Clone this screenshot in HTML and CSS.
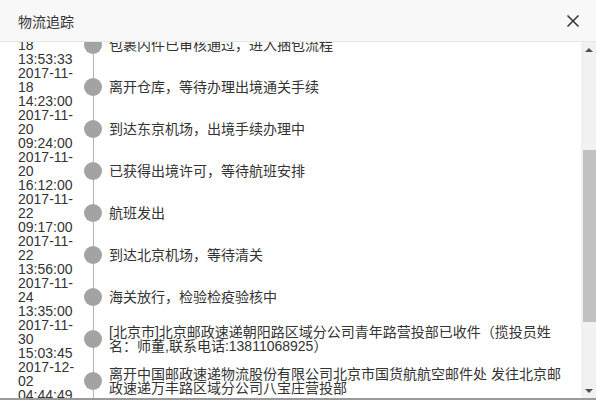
FILE: index.html
```html
<!DOCTYPE html>
<html>

<head>
    <title>物流追踪</title>
    <meta charset="utf-8">
    <meta name="viewport" content="width=device-width, initial-scale=1.0">
    <link rel="stylesheet" href="styles.css">
</head>

<body>
    <section class="dialog">
        <header class="kop">
            <h1>物流追踪</h1>
            <button class="luk" aria-label="关闭">
                <svg width="14" height="14" viewBox="0 0 14 14">
                    <path d="M1.5 1.5 L12.5 12.5 M12.5 1.5 L1.5 12.5" stroke="#333" stroke-width="1.5" fill="none" />
                </svg>
            </button>
        </header>

        <div class="krop">
            <div class="spor">
                <ul class="liste">
                    <li class="trin">
                        <p class="tid">2017-11-16 09:30:12</p>
                        <span class="prik"></span>
                        <p class="tekst">快件已揽收</p>
                    </li>
                    <li class="trin">
                        <p class="tid">2017-11-16 18:20:45</p>
                        <span class="prik"></span>
                        <p class="tekst">到达东京转运仓库</p>
                    </li>
                    <li class="trin">
                        <p class="tid">2017-11-17 11:05:20</p>
                        <span class="prik"></span>
                        <p class="tekst">包裹入库，等待审核</p>
                    </li>
                    <li class="trin">
                        <p class="tid">2017-11-17 16:42:10</p>
                        <span class="prik"></span>
                        <p class="tekst">包裹称重完成</p>
                    </li>
                    <li class="trin">
                        <p class="tid">2017-11-18 13:53:33</p>
                        <span class="prik"></span>
                        <p class="tekst">包裹内件已审核通过，进入捆包流程</p>
                    </li>
                    <li class="trin">
                        <p class="tid">2017-11-18 14:23:00</p>
                        <span class="prik"></span>
                        <p class="tekst">离开仓库，等待办理出境通关手续</p>
                    </li>
                    <li class="trin">
                        <p class="tid">2017-11-20 09:24:00</p>
                        <span class="prik"></span>
                        <p class="tekst">到达东京机场，出境手续办理中</p>
                    </li>
                    <li class="trin">
                        <p class="tid">2017-11-20 16:12:00</p>
                        <span class="prik"></span>
                        <p class="tekst">已获得出境许可，等待航班安排</p>
                    </li>
                    <li class="trin">
                        <p class="tid">2017-11-22 09:17:00</p>
                        <span class="prik"></span>
                        <p class="tekst">航班发出</p>
                    </li>
                    <li class="trin">
                        <p class="tid">2017-11-22 13:56:00</p>
                        <span class="prik"></span>
                        <p class="tekst">到达北京机场，等待清关</p>
                    </li>
                    <li class="trin">
                        <p class="tid">2017-11-24 13:35:00</p>
                        <span class="prik"></span>
                        <p class="tekst">海关放行，检验检疫验核中</p>
                    </li>
                    <li class="trin">
                        <p class="tid">2017-11-30 15:03:45</p>
                        <span class="prik"></span>
                        <p class="tekst">[北京市]北京邮政速递朝阳路区域分公司青年路营投部已收件（揽投员姓名：师董,联系电话:13811068925）</p>
                    </li>
                    <li class="trin">
                        <p class="tid">2017-12-02 04:44:49</p>
                        <span class="prik"></span>
                        <p class="tekst">离开中国邮政速递物流股份有限公司北京市国货航航空邮件处 发往北京邮政速递万丰路区域分公司八宝庄营投部</p>
                    </li>
                    <li class="trin">
                        <p class="tid">2017-12-02 09:15:00</p>
                        <span class="prik"></span>
                        <p class="tekst">到达北京邮政速递万丰路区域分公司八宝庄营投部</p>
                    </li>
                    <li class="trin">
                        <p class="tid">2017-12-02 10:30:22</p>
                        <span class="prik"></span>
                        <p class="tekst">派送中</p>
                    </li>
                    <li class="trin">
                        <p class="tid">2017-12-02 15:48:10</p>
                        <span class="prik"></span>
                        <p class="tekst">已签收</p>
                    </li>
                </ul>
            </div>

            <!-- rullebjælke tegnet i hånden -->
            <div class="rulle">
                <span class="pil op"></span>
                <div class="bane">
                    <span class="greb"></span>
                </div>
                <span class="pil ned"></span>
            </div>
        </div>
        <footer class="fod"></footer>
    </section>

    <script src="script.js"></script>
</body></html>
```

FILE: script.js
```js
// rul sporet ned til den viste position
document.addEventListener("DOMContentLoaded", () => {
    document.querySelector(".spor").scrollTop = 193;
});
```

FILE: styles.css
```css
body {
    margin: 0;
    background: white;
    font-family: "Liberation Sans", "Noto Sans CJK SC", sans-serif;
    color: #333;
}

.dialog {
    display: flex;
    flex-direction: column;
    height: 400px;
}

.kop {
    height: 41px;
    background-color: #f8f8f8;
    border-bottom: 1px solid #e5e5e5;
    display: flex;
    align-items: center;
    justify-content: space-between;
    padding: 0 14px 0 18px;
}

.kop h1 {
    margin: 0;
    font-size: 14px;
    font-weight: normal;
    color: #333;
}

.luk {
    border: none;
    background: none;
    padding: 0;
    width: 18px;
    height: 18px;
    display: flex;
    align-items: center;
    justify-content: center;
    cursor: pointer;
}

.krop {
    display: flex;
    height: 356px;
}

.spor {
    flex: 1;
    overflow: hidden;
}

.rulle {
    width: 15px;
    background: #f1f1f1;
    display: flex;
    flex-direction: column;
}

.pil {
    height: 15px;
    display: flex;
    align-items: center;
    justify-content: center;
}

.pil::after {
    content: "";
    border-left: 4px solid transparent;
    border-right: 4px solid transparent;
}

.op::after {
    border-bottom: 4px solid #505050;
}

.ned::after {
    border-top: 4px solid #505050;
}

.bane {
    flex: 1;
    padding: 93px 0 0 2px;
}

.greb {
    display: block;
    height: 172px;
    background: #c1c1c1;
}

.liste {
    list-style: none;
    margin: 0;
    padding: 7px 18px 0 18px;
}

.trin {
    display: grid;
    grid-template-columns: 60px 30px 1fr;
    align-items: center;
    position: relative;
    font-size: 14px;
    line-height: 14px;
}

/* lodret streg gennem prikkerne */
.trin::before {
    content: "";
    position: absolute;
    left: 75px;
    top: 0;
    bottom: 0;
    width: 1px;
    background: #b5b5b5;
}

.tid {
    margin: 0;
    color: #333;
}

.prik {
    justify-self: center;
    width: 18px;
    height: 18px;
    border-radius: 50%;
    background: #a3a3a3;
    position: relative;
}

.tekst {
    margin: 0 0 0 1px;
    color: #333;
}

.fod {
    height: 2px;
    background: #9a9a9a;
}
```
